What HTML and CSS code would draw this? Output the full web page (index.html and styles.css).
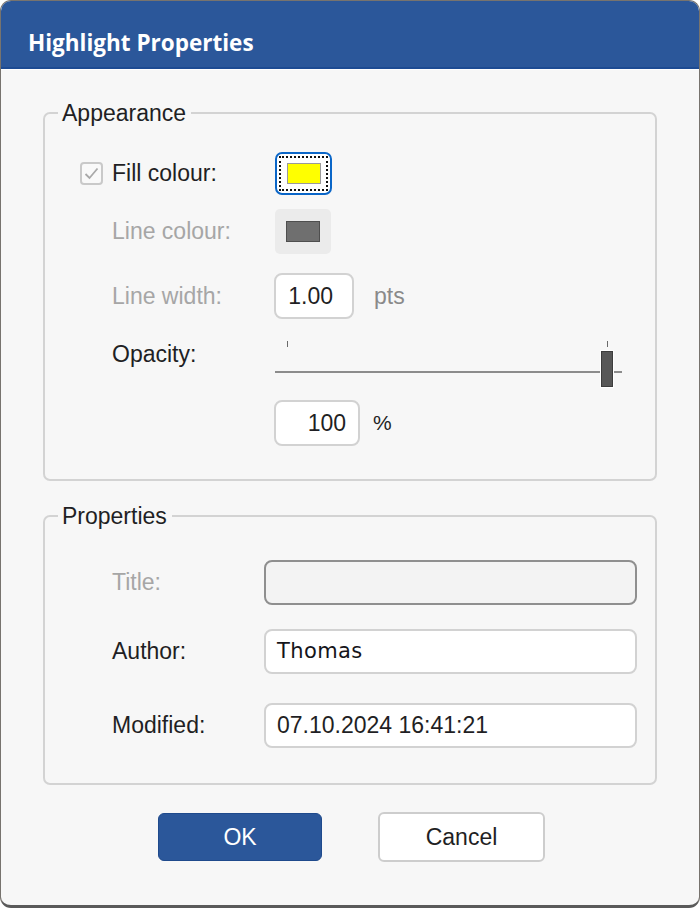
FILE: index.html
```html
<!DOCTYPE html>
<html>
    <head>
        <title>Highlight Properties</title>
        <link rel="stylesheet" href="styles.css">
    </head>
    <body>
        <div class="window">
            <div class="title_bar">Highlight Properties</div>

            <!-- Appearance group -->
            <fieldset class="group appearance">
                <legend>Appearance</legend>
                <div class="group_body">
                    <div class="row row_fill">
                        <span class="check">
                            <svg width="15" height="13" viewBox="0 0 15 13"><path d="M1.5 7 L5.5 11 L13.5 1.5" fill="none" stroke="#a9a9a9" stroke-width="1.8"/></svg>
                        </span>
                        <span class="label">Fill colour:</span>
                        <div class="colour_btn focused">
                            <div class="focus_ring"><span class="swatch yellow"></span></div>
                        </div>
                    </div>
                    <div class="row row_line">
                        <span></span>
                        <span class="label disabled">Line colour:</span>
                        <div class="colour_btn plain"><span class="swatch grey"></span></div>
                    </div>
                    <div class="row row_width">
                        <span></span>
                        <span class="label disabled">Line width:</span>
                        <div class="with_unit">
                            <div class="field small">1.00</div>
                            <span class="unit grey_unit">pts</span>
                        </div>
                    </div>
                    <div class="row row_opacity">
                        <span></span>
                        <span class="label">Opacity:</span>
                        <div class="slider">
                            <span class="tick tick_start"></span>
                            <span class="tick tick_end"></span>
                            <span class="track"></span>
                            <span class="thumb"></span>
                        </div>
                    </div>
                    <div class="row row_percent">
                        <span></span>
                        <span></span>
                        <div class="with_unit">
                            <div class="field percent">100</div>
                            <span class="unit pct">%</span>
                        </div>
                    </div>
                </div>
            </fieldset>

            <!-- Properties group -->
            <fieldset class="group properties">
                <legend>Properties</legend>
                <div class="group_body">
                    <div class="prow">
                        <span class="label disabled">Title:</span>
                        <div class="field wide disabled_field"></div>
                    </div>
                    <div class="prow prow_author">
                        <span class="label">Author:</span>
                        <div class="field wide author">Thomas</div>
                    </div>
                    <div class="prow prow_modified">
                        <span class="label">Modified:</span>
                        <div class="field wide">07.10.2024 16:41:21</div>
                    </div>
                </div>
            </fieldset>

            <div class="buttons">
                <button class="btn ok">OK</button>
                <button class="btn cancel">Cancel</button>
            </div>
        </div>
    </body>
</html>
```

FILE: styles.css
```css
body{
    margin: 0;
    background: #ffffff;
    font-family: "Liberation Sans", Arial, sans-serif;
    font-size: 23px;
    color: #1f1f24;
}
.window{
    box-sizing: border-box;
    width: 700px;
    height: 908px;
    border: 1px solid #77736e;
    border-bottom: 3px solid #5a5a5a;
    border-radius: 11px;
    overflow: hidden;
    background: #f7f7f7;
    padding: 0 42px;
}
.title_bar{
    margin: 0 -42px;
    height: 58px;
    padding-top: 8px;
    padding-left: 27px;
    border-bottom: 2px solid #1d4b93;
    box-shadow: 0 1px 0 #ffffff;
    background: #2b579a;
    color: #ffffff;
    font-family: "Open Sans", "Noto Sans", sans-serif;
    font-weight: 700;
    font-size: 22.5px;
    line-height: 68px;
}

/* group boxes */
.group{
    margin: 0;
    padding: 0;
    border: 2px solid #d3d3d3;
    border-radius: 7px;
    min-width: 0;
}
.group legend{
    margin-left: 13px;
    padding: 0 5px 0 4px;
    line-height: 26px;
    font-size: 23px;
}
.appearance{
    margin-top: 31px;
}
.appearance .group_body{
    padding: 24px 18px 33px 33px;
}
.properties{
    margin-top: 22px;
}
.properties .group_body{
    padding: 31px 18px 35px 67px;
}

.row{
    display: grid;
    grid-template-columns: 34px 162px auto;
    align-items: center;
    height: 46px;
}
.row_line{ margin-top: 12px; }
.row_width{ margin-top: 19px; }
.row_opacity{ margin-top: 12px; }
.row_percent{ margin-top: 23px; }

.label{
    white-space: nowrap;
}
.disabled{
    color: #a6a6a6;
}

.check{
    box-sizing: border-box;
    width: 23px;
    height: 23px;
    margin-left: 2px;
    border: 2px solid #c9c9c9;
    border-radius: 4px;
    background: #f9f9f9;
    display: flex;
    align-items: center;
    justify-content: center;
}

/* colour buttons */
.colour_btn{
    box-sizing: border-box;
    display: flex;
    align-items: center;
    justify-content: center;
}
.focused{
    width: 57px;
    height: 43px;
    margin-left: 1px;
    border: 2px solid #0a66c8;
    border-radius: 7px;
    background: #ffffff;
    padding: 2px;
}
.focus_ring{
    box-sizing: border-box;
    width: 100%;
    height: 100%;
    border: 2px dotted #111111;
    display: flex;
    align-items: center;
    justify-content: center;
}
.plain{
    width: 56px;
    height: 45px;
    margin-left: 1px;
    border-radius: 5px;
    background: #ebebeb;
}
.swatch{
    box-sizing: border-box;
    display: block;
    width: 34px;
    height: 21px;
    border: 1px solid #9a9a9a;
}
.yellow{
    background: #ffff00;
}
.grey{
    background: #6f6f6f;
    border-color: #4e4e4e;
}

/* text fields */
.with_unit{
    display: flex;
    align-items: center;
}
.field{
    box-sizing: border-box;
    height: 46px;
    border: 2px solid #d2d2d2;
    border-radius: 8px;
    background: #ffffff;
    line-height: 42px;
    white-space: nowrap;
}
.small{
    width: 80px;
    text-align: right;
    padding-right: 19px;
}
.percent{
    width: 86px;
    text-align: right;
    padding-right: 12px;
}
.unit{
    margin-left: 20px;
}
.grey_unit{
    color: #8a8a8a;
}
.pct{
    margin-left: 13px;
    font-size: 21px;
}

/* slider */
.slider{
    position: relative;
    width: 347px;
    height: 46px;
    margin-left: 1px;
}
.tick{
    position: absolute;
    top: 10px;
    width: 1px;
    height: 6px;
    background: #6a6a6a;
}
.tick_start{ left: 12px; }
.tick_end{ left: 332px; }
.track{
    position: absolute;
    left: 0;
    right: 0;
    top: 40px;
    height: 2px;
    background: #8c8c8c;
}
.thumb{
    position: absolute;
    left: 326px;
    top: 20px;
    box-sizing: border-box;
    width: 12px;
    height: 36px;
    background: #575757;
    border: 1px solid #3d3d3d;
    outline: 1px solid #ffffff;
}

/* properties rows */
.prow{
    display: grid;
    grid-template-columns: 152px 1fr;
    align-items: center;
    height: 45px;
}
.prow_author{ margin-top: 24px; }
.prow_modified{ margin-top: 29px; }
.wide{
    height: 45px;
    padding-left: 11px;
    line-height: 41px;
}
.disabled_field{
    border-color: #8f8f8f;
    background: #f3f3f3;
}
.author{
    font-family: "DejaVu Sans", Verdana, sans-serif;
    font-size: 21px;
    letter-spacing: 0.4px;
    color: #15151a;
}

/* buttons */
.buttons{
    display: flex;
    justify-content: center;
    align-items: center;
    gap: 56px;
    margin-top: 27px;
    padding-left: 3px;
}
.btn{
    box-sizing: border-box;
    font-family: "Liberation Sans", Arial, sans-serif;
    font-size: 23px;
    border-radius: 6px;
    padding: 0;
}
.ok{
    width: 164px;
    height: 48px;
    background: #2b579a;
    border: 1px solid #1f4a8c;
    color: #ffffff;
}
.cancel{
    width: 167px;
    height: 50px;
    background: #ffffff;
    border: 2px solid #cdcdcd;
    color: #1f1f24;
}
```
